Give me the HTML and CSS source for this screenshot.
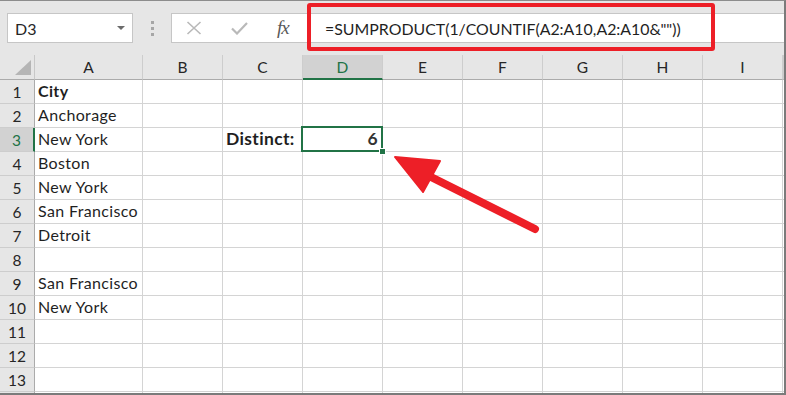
FILE: index.html
```html
<!DOCTYPE html>
<html lang="en">
	<head>
		<meta charset="UTF-8" />
		<title>Distinct count - SUMPRODUCT / COUNTIF</title>
		<link rel="stylesheet" href="styles.css">
	</head>
	<body>
		<div class="excel">
			<!-- Barre de formule -->
			<div class="formula-bar">
				<div class="name-box">
					<span>D3</span>
					<span class="name-box-caret"></span>
				</div>
				<div class="grip"><i></i><i></i><i></i></div>
				<div class="formula-box">
					<div class="formula-tools">
						<svg class="tool-icon" viewBox="0 0 16 14" width="16" height="14">
							<path d="M1.5 1 L14.5 13 M14.5 1 L1.5 13" stroke="#b9b9b9" stroke-width="1.6" fill="none" />
						</svg>
						<svg class="tool-icon" viewBox="0 0 17 13" width="17" height="13">
							<path d="M1 6.5 L6 11.5 L16 1" stroke="#b9b9b9" stroke-width="2.2" fill="none" />
						</svg>
						<span class="fx">fx</span>
					</div>
					<div class="formula-input">=SUMPRODUCT(1/COUNTIF(A2:A10,A2:A10&amp;""))</div>
				</div>
			</div>

			<!-- Feuille -->
			<div class="sheet">
				<div class="row head-row">
					<div class="corner"></div>
					<div class="col-head">A</div>
					<div class="col-head">B</div>
					<div class="col-head">C</div>
					<div class="col-head active">D</div>
					<div class="col-head">E</div>
					<div class="col-head">F</div>
					<div class="col-head">G</div>
					<div class="col-head">H</div>
					<div class="col-head">I</div>
					<div class="col-head"></div>
				</div>
				<div class="row">
					<div class="row-head">1</div>
					<div class="cell bold">City</div>
					<div class="cell"></div><div class="cell"></div><div class="cell"></div><div class="cell"></div>
					<div class="cell"></div><div class="cell"></div><div class="cell"></div><div class="cell"></div><div class="cell"></div>
				</div>
				<div class="row">
					<div class="row-head">2</div>
					<div class="cell">Anchorage</div>
					<div class="cell"></div><div class="cell"></div><div class="cell"></div><div class="cell"></div>
					<div class="cell"></div><div class="cell"></div><div class="cell"></div><div class="cell"></div><div class="cell"></div>
				</div>
				<div class="row">
					<div class="row-head active">3</div>
					<div class="cell">New York</div>
					<div class="cell"></div>
					<div class="cell bold big">Distinct:</div>
					<div class="cell bold big number selected">6<span class="fill-handle"></span></div>
					<div class="cell"></div><div class="cell"></div><div class="cell"></div><div class="cell"></div><div class="cell"></div>
				</div>
				<div class="row">
					<div class="row-head">4</div>
					<div class="cell">Boston</div>
					<div class="cell"></div><div class="cell"></div><div class="cell"></div><div class="cell"></div>
					<div class="cell"></div><div class="cell"></div><div class="cell"></div><div class="cell"></div><div class="cell"></div>
				</div>
				<div class="row">
					<div class="row-head">5</div>
					<div class="cell">New York</div>
					<div class="cell"></div><div class="cell"></div><div class="cell"></div><div class="cell"></div>
					<div class="cell"></div><div class="cell"></div><div class="cell"></div><div class="cell"></div><div class="cell"></div>
				</div>
				<div class="row">
					<div class="row-head">6</div>
					<div class="cell">San Francisco</div>
					<div class="cell"></div><div class="cell"></div><div class="cell"></div><div class="cell"></div>
					<div class="cell"></div><div class="cell"></div><div class="cell"></div><div class="cell"></div><div class="cell"></div>
				</div>
				<div class="row">
					<div class="row-head">7</div>
					<div class="cell">Detroit</div>
					<div class="cell"></div><div class="cell"></div><div class="cell"></div><div class="cell"></div>
					<div class="cell"></div><div class="cell"></div><div class="cell"></div><div class="cell"></div><div class="cell"></div>
				</div>
				<div class="row">
					<div class="row-head">8</div>
					<div class="cell"></div>
					<div class="cell"></div><div class="cell"></div><div class="cell"></div><div class="cell"></div>
					<div class="cell"></div><div class="cell"></div><div class="cell"></div><div class="cell"></div><div class="cell"></div>
				</div>
				<div class="row">
					<div class="row-head">9</div>
					<div class="cell">San Francisco</div>
					<div class="cell"></div><div class="cell"></div><div class="cell"></div><div class="cell"></div>
					<div class="cell"></div><div class="cell"></div><div class="cell"></div><div class="cell"></div><div class="cell"></div>
				</div>
				<div class="row">
					<div class="row-head">10</div>
					<div class="cell">New York</div>
					<div class="cell"></div><div class="cell"></div><div class="cell"></div><div class="cell"></div>
					<div class="cell"></div><div class="cell"></div><div class="cell"></div><div class="cell"></div><div class="cell"></div>
				</div>
				<div class="row">
					<div class="row-head">11</div>
					<div class="cell"></div>
					<div class="cell"></div><div class="cell"></div><div class="cell"></div><div class="cell"></div>
					<div class="cell"></div><div class="cell"></div><div class="cell"></div><div class="cell"></div><div class="cell"></div>
				</div>
				<div class="row">
					<div class="row-head">12</div>
					<div class="cell"></div>
					<div class="cell"></div><div class="cell"></div><div class="cell"></div><div class="cell"></div>
					<div class="cell"></div><div class="cell"></div><div class="cell"></div><div class="cell"></div><div class="cell"></div>
				</div>
				<div class="row">
					<div class="row-head">13</div>
					<div class="cell"></div>
					<div class="cell"></div><div class="cell"></div><div class="cell"></div><div class="cell"></div>
					<div class="cell"></div><div class="cell"></div><div class="cell"></div><div class="cell"></div><div class="cell"></div>
				</div>
				<div class="row">
					<div class="row-head"></div>
					<div class="cell"></div>
					<div class="cell"></div><div class="cell"></div><div class="cell"></div><div class="cell"></div>
					<div class="cell"></div><div class="cell"></div><div class="cell"></div><div class="cell"></div><div class="cell"></div>
				</div>
			</div>

			<!-- Annotations -->
			<div class="callout-box"></div>
			<svg class="callout-arrow" viewBox="0 0 786 395" width="786" height="395">
				<line x1="431" y1="177" x2="535" y2="229" stroke="#ed1f27" stroke-width="8" stroke-linecap="round" />
				<polygon points="395,157 440,161 423,192" fill="#ed1f27" stroke="#ed1f27" stroke-width="2" stroke-linejoin="round" />
			</svg>
		</div>
	</body>
</html>
```

FILE: styles.css
```css
body {
	margin: 0;
	background: #ffffff;
	font-family: "Lato", "Open Sans", sans-serif;
	color: #1f1f1f;
}

.excel {
	position: relative;
	width: 786px;
	height: 395px;
	box-sizing: border-box;
	border-top: 1px solid #8c8c8c;
	border-right: 2px solid #7b7b7b;
	border-bottom: 2px solid #7b7b7b;
	overflow: hidden;
	display: flex;
	flex-direction: column;
}

/*BARRE DE FORMULE*/
.formula-bar {
	height: 54px;
	flex: none;
	background: #e6e6e6;
	display: flex;
	align-items: flex-start;
	padding-top: 12px;
	box-sizing: border-box;
}

.name-box {
	margin-left: 7px;
	width: 126px;
	height: 30px;
	box-sizing: border-box;
	background: #ffffff;
	border: 1px solid #c6c6c6;
	display: flex;
	align-items: center;
	justify-content: space-between;
	padding: 0 7px 0 7px;
	font-size: 16px;
	color: #262626;
}

.name-box-caret {
	width: 0;
	height: 0;
	border-left: 4px solid transparent;
	border-right: 4px solid transparent;
	border-top: 4px solid #6b6b6b;
}

.grip {
	width: 38px;
	height: 30px;
	display: flex;
	flex-direction: column;
	align-items: center;
	justify-content: center;
	gap: 3px;
}

.grip i {
	width: 3px;
	height: 3px;
	background: #a6a6a6;
}

.formula-box {
	flex: 1;
	height: 30px;
	box-sizing: border-box;
	background: #ffffff;
	border: 1px solid #c6c6c6;
	border-right: none;
	display: flex;
	align-items: center;
}

.formula-tools {
	width: 136px;
	display: flex;
	align-items: center;
	padding-left: 14px;
	gap: 29px;
	box-sizing: border-box;
}

.fx {
	font-family: "Liberation Serif", serif;
	font-style: italic;
	font-size: 19px;
	color: #595959;
	letter-spacing: -1px;
}

.formula-input {
	padding-left: 17px;
	font-size: 15.9px;
	color: #1f1f1f;
	white-space: nowrap;
}
/*FIN BARRE DE FORMULE*/

.sheet {
	flex: 1;
	display: flex;
	flex-direction: column;
}

.row {
	display: grid;
	grid-template-columns: 35px 108px repeat(8, 80px) 1fr;
	height: 24px;
	flex: none;
}

.head-row {
	height: 25px;
	background: #e6e6e6;
}

.corner {
	position: relative;
	border-right: 1px solid #c8c8c8;
	border-bottom: 1px solid #ababab;
}

.corner::after {
	content: "";
	position: absolute;
	right: 3px;
	bottom: 4px;
	width: 0;
	height: 0;
	border-left: 16px solid transparent;
	border-bottom: 15px solid #b5b5b5;
}

.col-head {
	display: flex;
	align-items: center;
	justify-content: center;
	font-size: 15.5px;
	color: #262626;
	border-right: 1px solid #cdcdcd;
	border-bottom: 1px solid #ababab;
}

.col-head.active {
	background: #d2d2d2;
	color: #217346;
	border-bottom: 2px solid #217346;
}

.row-head {
	background: #e6e6e6;
	display: flex;
	align-items: center;
	justify-content: center;
	font-size: 15.5px;
	color: #262626;
	border-right: 1px solid #ababab;
	border-bottom: 1px solid #cdcdcd;
}

.row-head.active {
	background: #d2d2d2;
	color: #217346;
	border-right: 2px solid #217346;
}

.cell {
	position: relative;
	display: flex;
	align-items: flex-end;
	padding: 0 4px 2px 3px;
	font-size: 16px;
	line-height: 20px;
	letter-spacing: 0.35px;
	white-space: nowrap;
	border-right: 1px solid #d4d4d4;
	border-bottom: 1px solid #d4d4d4;
	min-width: 0;
}

.cell.bold {
	font-weight: bold;
}

.cell.big {
	font-size: 17.5px;
}

.cell.number {
	justify-content: flex-end;
	color: #333333;
}

.cell.selected::after {
	content: "";
	position: absolute;
	left: -2px;
	top: -2px;
	right: -1px;
	bottom: -1px;
	border: 2px solid #217346;
}

.fill-handle {
	position: absolute;
	right: -4px;
	bottom: -4px;
	width: 5px;
	height: 5px;
	background: #217346;
	border: 1px solid #ffffff;
	z-index: 2;
}

/* Annotations en rouge */
.callout-box {
	position: absolute;
	left: 307px;
	top: 2px;
	width: 408px;
	height: 48px;
	box-sizing: border-box;
	border: 4px solid #ed1f27;
	border-radius: 3px;
}

.callout-arrow {
	position: absolute;
	left: 0;
	top: -1px;
	pointer-events: none;
}
```
